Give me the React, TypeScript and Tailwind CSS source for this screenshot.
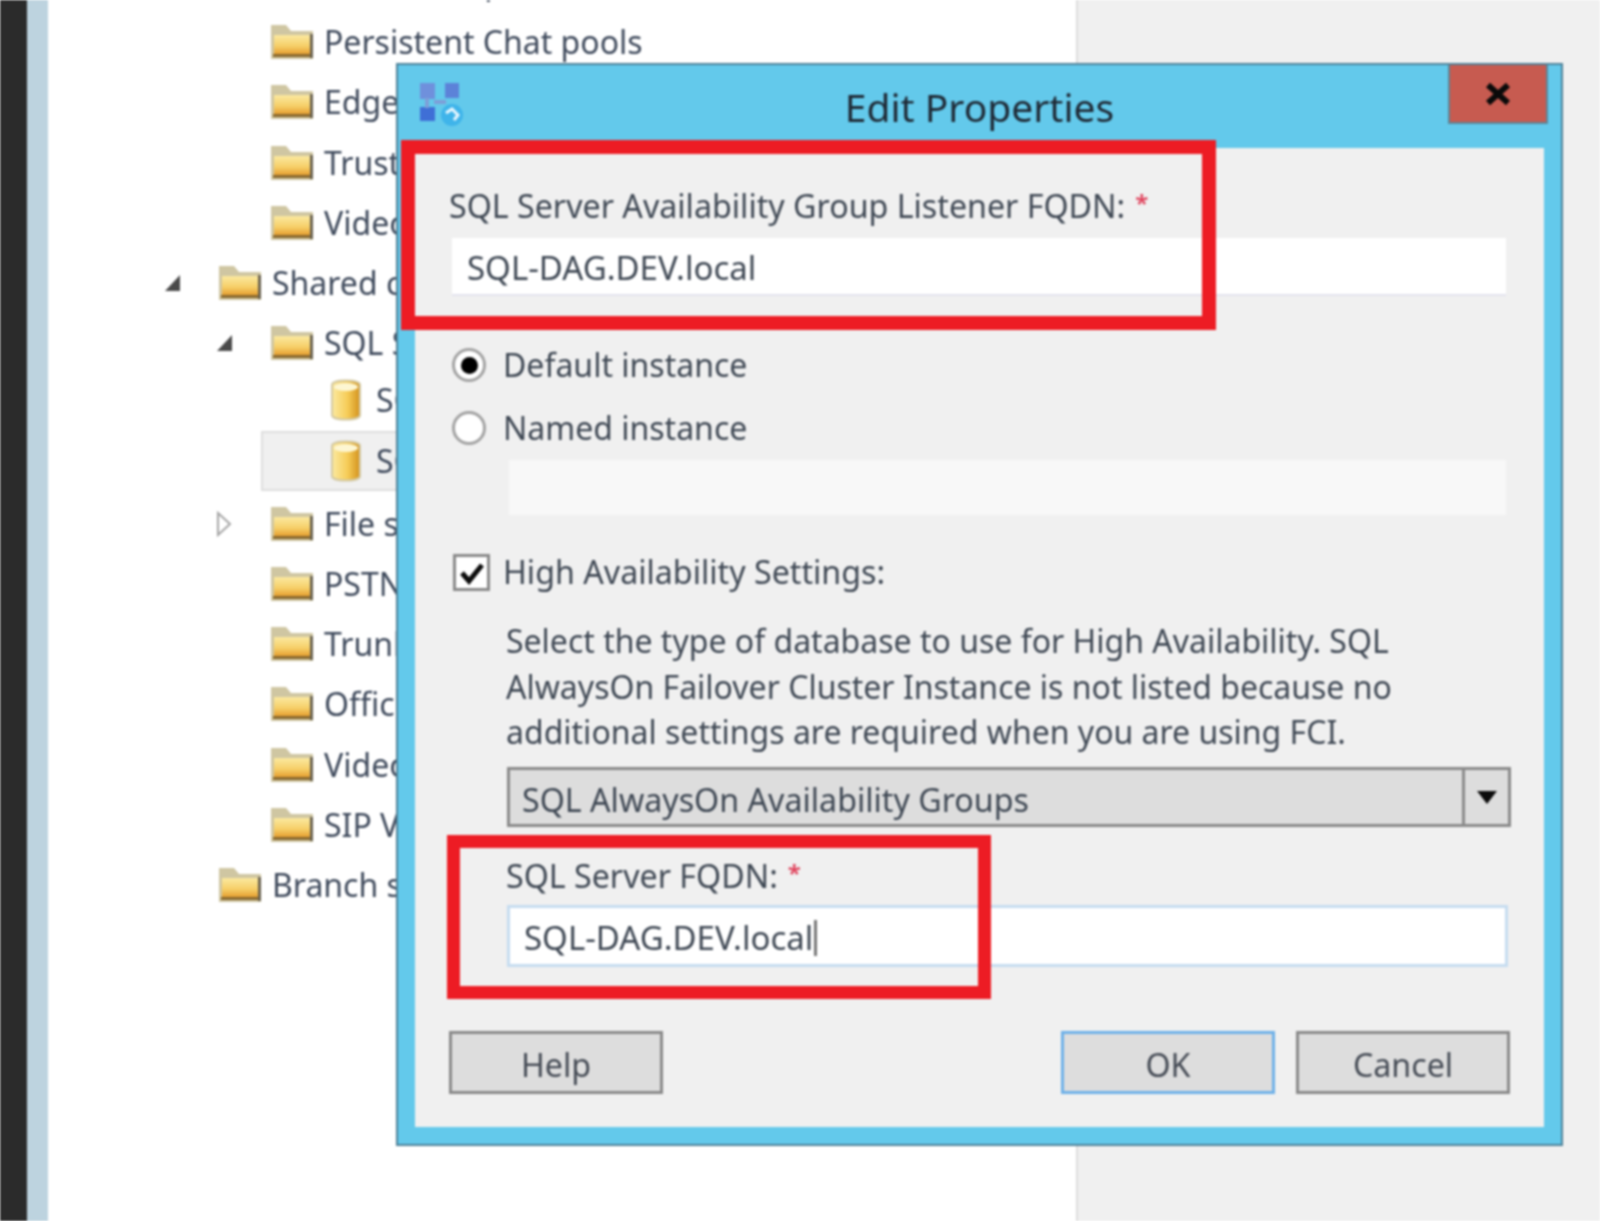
// Topology Builder: Edit Properties dialog over the tree view
const TREE_ROWS = [
  { label: "Mediation pools", level: 2, icon: "folder" },
  { label: "Persistent Chat pools", level: 2, icon: "folder" },
  { label: "Edge pools", level: 2, icon: "folder" },
  { label: "Trusted application servers", level: 2, icon: "folder" },
  { label: "Video Interop servers", level: 2, icon: "folder" },
  { label: "Shared components", level: 1, icon: "folder", arrow: "open" },
  { label: "SQL Server stores", level: 2, icon: "folder", arrow: "open" },
  { label: "SQL-A.DEV.local", level: 3, icon: "db" },
  { label: "SQL-B.DEV.local", level: 3, icon: "db", selected: true },
  { label: "File stores", level: 2, icon: "folder", arrow: "closed" },
  { label: "PSTN gateways", level: 2, icon: "folder" },
  { label: "Trunks", level: 2, icon: "folder" },
  { label: "Office Web Apps Servers", level: 2, icon: "folder" },
  { label: "Video Interop Servers", level: 2, icon: "folder" },
  { label: "SIP Video trunks", level: 2, icon: "folder" },
  { label: "Branch sites", level: 1, icon: "folder" },
];

function FolderIcon() {
  return (
    <svg width="45" height="36" viewBox="0 0 45 36" className="shrink-0">
      <defs>
        <linearGradient id="folderFill" x1="0" y1="0" x2="0" y2="1">
          <stop offset="0" stopColor="#fbe9a0" />
          <stop offset="0.55" stopColor="#f6cf68" />
          <stop offset="1" stopColor="#e49a2a" />
        </linearGradient>
      </defs>
      <path d="M2 1h15l5 6h22v28H2z" fill="#cfc6a2" />
      <rect x="5" y="11" width="37" height="20" fill="url(#folderFill)" />
      <rect x="4" y="30" width="38" height="3" fill="#8a6a30" />
      <rect x="41" y="10" width="3" height="24" fill="#6b6350" />
    </svg>
  );
}

function DbIcon() {
  return (
    <svg width="32" height="42" viewBox="0 0 32 42" className="shrink-0">
      <defs>
        <linearGradient id="dbFill" x1="0" y1="0" x2="1" y2="0">
          <stop offset="0" stopColor="#fbe9a0" />
          <stop offset="0.55" stopColor="#f6cd58" />
          <stop offset="1" stopColor="#d2901c" />
        </linearGradient>
      </defs>
      <path d="M2 6c0-6 28-6 28 0v30c0 6-28 6-28 0z" fill="url(#dbFill)" stroke="#d3c9a4" strokeWidth="2" />
      <ellipse cx="16" cy="8" rx="12" ry="4" fill="#fdf6d2" />
    </svg>
  );
}

function TreeArrow({ kind }: { kind: string }) {
  if (kind === "closed") {
    return (
      <svg width="17" height="26" viewBox="0 0 17 26">
        <path d="M2 2l12 11L2 24z" fill="#fff" stroke="#a6a6a6" strokeWidth="2" />
      </svg>
    );
  }
  return (
    <svg width="17" height="18" viewBox="0 0 17 18">
      <path d="M16 1v16H1z" fill="#4a4a4a" />
    </svg>
  );
}

function TreeRow({ row }: { row: (typeof TREE_ROWS)[number] }) {
  const padding = row.level === 1 ? "pl-[164px]" : row.level === 2 ? "pl-[216px]" : "pl-[261px]";
  return (
    <div className={`flex h-[60.2px] shrink-0 items-center text-[32px] ${padding}`}>
      {row.level < 3 && (
        <div className="flex w-[53px] shrink-0 items-center">{row.arrow && <TreeArrow kind={row.arrow} />}</div>
      )}
      {row.icon === "folder" ? (
        <div className="mr-[10px] flex">
          <FolderIcon />
        </div>
      ) : (
        <div
          className={`flex h-[60px] w-[500px] shrink-0 -translate-y-[3px] items-center pl-[67px] ${
            row.selected ? "border-2 border-[#dedede] bg-[#f0f0f0]" : "border-2 border-transparent"
          }`}
        >
          <DbIcon />
          <span className="ml-[14px] text-[#3f4a5c]">{row.label}</span>
        </div>
      )}
      {row.icon === "folder" && <span className="whitespace-nowrap text-[#3f4a5c]">{row.label}</span>}
    </div>
  );
}

function DialogLogo() {
  return (
    <svg width="44" height="44" viewBox="0 0 44 44">
      <rect x="0" y="0" width="15" height="16" fill="#6f90dc" />
      <rect x="25" y="0" width="14" height="15" fill="#5c82d8" />
      <rect x="0" y="24" width="15" height="14" fill="#3f6fd6" />
      <path d="M7 15v10M14 19h12" stroke="#7d9fd8" strokeWidth="4" fill="none" />
      <circle cx="32" cy="32" r="11" fill="#3fb4ea" />
      <path d="M26 30l6-4 6 6-4 5" stroke="#e8f7ff" strokeWidth="3" fill="none" />
    </svg>
  );
}

function RequiredStar() {
  return <span className="ml-[10px] align-[6px] text-[24px] font-semibold text-[#e0405a]">*</span>;
}

function Radio({ checked }: { checked?: boolean }) {
  return (
    <div className="flex h-[34px] w-[34px] shrink-0 items-center justify-center rounded-full border-[3px] border-[#a3a3a3] bg-white">
      {checked && <div className="h-[17px] w-[17px] rounded-full bg-black" />}
    </div>
  );
}

function DialogButton({ label, primary }: { label: string; primary?: boolean }) {
  return (
    <button
      type="button"
      className={`flex h-[63px] w-[214px] items-center justify-center border-[3px] bg-[#dddddd] pt-[4px] text-[#454b55] ${
        primary ? "border-[#6fb1e8]" : "border-[#8a8a8a]"
      }`}
    >
      {label}
    </button>
  );
}

export default function App() {
  return (
    <div
      className="relative flex h-[1221px] w-[1600px] overflow-hidden bg-white text-[32.2px] leading-[44px] blur-[1px]"
      style={{ fontFamily: '"Noto Sans", "Open Sans", sans-serif' }}
    >
      {/* 왼쪽 띠 */}
      <div className="w-[27px] shrink-0 bg-[#2b2b2b]" />
      <div className="w-[21px] shrink-0 bg-[#bdd3df]" />

      {/* 트리 */}
      <div className="flex w-[1030px] shrink-0 flex-col overflow-hidden border-r-2 border-[#dddddd] bg-white">
        <div className="-ml-[48px] -mt-[48px] flex flex-col">
          {TREE_ROWS.map((row) => (
            <TreeRow key={row.label} row={row} />
          ))}
        </div>
      </div>
      <div className="flex-1 bg-[#f0f0f0]" />

      {/* 다이얼로그 */}
      <div className="absolute left-[396px] top-[63px] flex h-[1083px] w-[1167px] flex-col border-2 border-[#4f8299] bg-[#63c9eb]">
        <div className="relative flex h-[83px] shrink-0 items-center justify-center">
          <div className="absolute left-[22px] top-[18px] flex">
            <DialogLogo />
          </div>
          <span className="text-[39px] text-[#1f2a36]">Edit Properties</span>
          <div className="absolute left-[1050px] top-0 flex h-[59px] w-[100px] items-center justify-center border-x-2 border-b-2 border-[#5e8496] bg-[#c75b50]">
            <svg width="26" height="24" viewBox="0 0 26 24">
              <path d="M3 3l20 18M23 3L3 21" stroke="#0a0a0a" strokeWidth="6" />
            </svg>
          </div>
        </div>

        <div className="mx-[17px] mb-[17px] flex flex-1 flex-col bg-[#f0f0f0] pl-[34px] pr-[38px] pt-[33px] text-[#3f4854]">
          <div className="h-[48px] whitespace-nowrap">
            SQL Server Availability Group Listener FQDN:
            <RequiredStar />
          </div>
          <div className="ml-[3px] mt-[9px] flex h-[56px] items-center bg-white pl-[15px] pt-[4px] text-[33px] shadow-[0_2px_0_#e3e3ee]">
            SQL-DAG.DEV.local
          </div>

          <div className="ml-[3px] mt-[49px] flex h-[44px] items-center gap-[17px] text-[32px]">
            <Radio checked />
            <span>Default instance</span>
          </div>
          <div className="ml-[3px] mt-[19px] flex h-[44px] items-center gap-[17px] text-[32px]">
            <Radio />
            <span>Named instance</span>
          </div>
          <div className="ml-[60px] mt-[10px] h-[55px] shrink-0 bg-[#f8f8f8]" />

          <div className="ml-[4px] mt-[35px] flex h-[44px] items-center gap-[13px]">
            <div className="flex h-[37px] w-[37px] items-center justify-center border-[3px] border-[#8a8a8a] bg-white">
              <svg width="27" height="25" viewBox="0 0 27 25">
                <path d="M4 13l7 8L24 5" stroke="#0c0c0c" strokeWidth="5" fill="none" />
              </svg>
            </div>
            <span>High Availability Settings:</span>
          </div>

          <div className="ml-[57px] mt-[24px] h-[137px] whitespace-nowrap text-[32px] leading-[45.5px]">
            Select the type of database to use for High Availability. SQL
            <br />
            AlwaysOn Failover Cluster Instance is not listed because no
            <br />
            additional settings are required when you are using FCI.
          </div>

          <div className="ml-[58px] mr-[-5px] mt-[12px] flex h-[60px] shrink-0 items-center border-[3px] border-[#8a8a8a] bg-[#dddddd]">
            <span className="flex-1 pl-[12px] pt-[5px]">SQL AlwaysOn Availability Groups</span>
            <div className="flex h-full w-[46px] items-center justify-center border-l-[3px] border-[#8a8a8a]">
              <svg width="20" height="14" viewBox="0 0 20 14">
                <path d="M0 1h20L10 14z" fill="#0c0c0c" />
              </svg>
            </div>
          </div>

          <div className="ml-[57px] mt-[24px] h-[47px] whitespace-nowrap">
            SQL Server FQDN:
            <RequiredStar />
          </div>
          <div className="ml-[58px] mr-[-2px] mt-[7px] flex h-[62px] shrink-0 items-center border-[3px] border-[#c6dcf0] bg-white pl-[14px] pt-[3px] text-[33px]">
            <span>SQL-DAG.DEV.local</span>
            <div className="ml-[1px] h-[36px] w-[3px] bg-[#777777]" />
          </div>

          <div className="mr-[-4px] mt-[64px] flex">
            <DialogButton label="Help" />
            <div className="flex-1" />
            <DialogButton label="OK" primary />
            <div className="w-[21px]" />
            <DialogButton label="Cancel" />
          </div>
        </div>
      </div>

      {/* 빨간 강조 박스 */}
      <div className="pointer-events-none absolute left-[401px] top-[140px] h-[190px] w-[815px] border-[14px] border-[#ed1c24]" />
      <div className="pointer-events-none absolute left-[447px] top-[835px] h-[164px] w-[544px] border-[13px] border-[#ed1c24]" />
    </div>
  );
}
